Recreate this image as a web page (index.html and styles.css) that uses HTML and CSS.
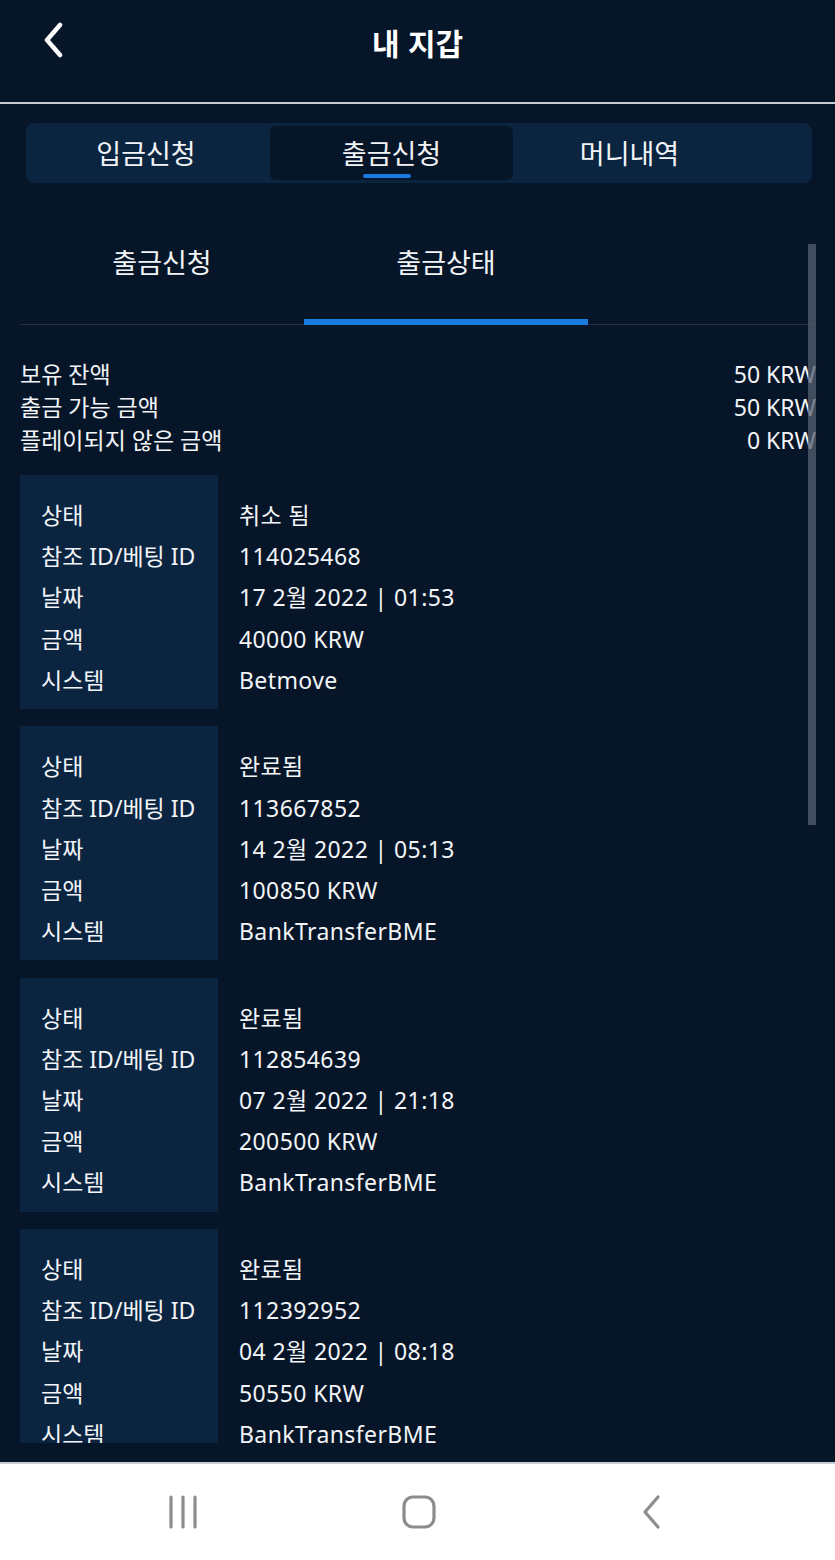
FILE: index.html
```html
<!DOCTYPE html>
<html lang="ko">
<head>
  <meta charset="UTF-8" />
  <title>내 지갑</title>
  <meta name="viewport" content="width=device-width, initial-scale=1" />
  <link rel="stylesheet" href="styles.css">
</head>
<body>

<div class="screen">
  <!-- 상단 헤더 -->
  <header class="topbar">
    <button class="back" aria-label="뒤로">
      <svg width="24" height="36" viewBox="0 0 24 36"><path d="M18 3 L5 18 L18 33" fill="none" stroke="#fff" stroke-width="4.5" stroke-linecap="round" stroke-linejoin="round"/></svg>
    </button>
    <h1>내 지갑</h1>
  </header>

  <!-- 메인 탭 -->
  <div class="main-tabs">
    <div class="main-tab">입금신청</div>
    <div class="main-tab active">출금신청</div>
    <div class="main-tab">머니내역</div>
  </div>

  <div class="content">
    <div class="sub-tabs">
      <div class="sub-tab">출금신청</div>
      <div class="sub-tab active">출금상태</div>
    </div>

    <div class="balance">
      <div class="bal-row"><span>보유 잔액</span><span>50 KRW</span></div>
      <div class="bal-row"><span>출금 가능 금액</span><span>50 KRW</span></div>
      <div class="bal-row"><span>플레이되지 않은 금액</span><span>0 KRW</span></div>
    </div>

    <div class="history">
      <div class="card">
        <div class="labels"><div>상태</div><div>참조 ID/베팅 ID</div><div>날짜</div><div>금액</div><div>시스템</div></div>
        <div class="values"><div>취소 됨</div><div>114025468</div><div>17 2월 2022 | 01:53</div><div>40000 KRW</div><div>Betmove</div></div>
      </div>
      <div class="card">
        <div class="labels"><div>상태</div><div>참조 ID/베팅 ID</div><div>날짜</div><div>금액</div><div>시스템</div></div>
        <div class="values"><div>완료됨</div><div>113667852</div><div>14 2월 2022 | 05:13</div><div>100850 KRW</div><div>BankTransferBME</div></div>
      </div>
      <div class="card">
        <div class="labels"><div>상태</div><div>참조 ID/베팅 ID</div><div>날짜</div><div>금액</div><div>시스템</div></div>
        <div class="values"><div>완료됨</div><div>112854639</div><div>07 2월 2022 | 21:18</div><div>200500 KRW</div><div>BankTransferBME</div></div>
      </div>
      <div class="card">
        <div class="labels"><div>상태</div><div>참조 ID/베팅 ID</div><div>날짜</div><div>금액</div><div>시스템</div></div>
        <div class="values"><div>완료됨</div><div>112392952</div><div>04 2월 2022 | 08:18</div><div>50550 KRW</div><div>BankTransferBME</div></div>
      </div>
    </div>

    <div class="scrollbar"></div>
  </div>

  <!-- 안드로이드 내비게이션 바 -->
  <footer class="navbar">
    <svg width="30" height="34" viewBox="0 0 30 34"><path d="M3 2 V32 M15 2 V32 M27 2 V32" stroke="#8c8c8c" stroke-width="3.2" stroke-linecap="round"/></svg>
    <svg width="34" height="34" viewBox="0 0 34 34"><rect x="2" y="2" width="30" height="30" rx="9" fill="none" stroke="#8c8c8c" stroke-width="3.2"/></svg>
    <svg width="24" height="34" viewBox="0 0 24 34"><path d="M18 2 L5 17 L18 32" fill="none" stroke="#8c8c8c" stroke-width="3.2" stroke-linecap="round" stroke-linejoin="round"/></svg>
  </footer>
</div>

</body>
</html>
```

FILE: styles.css
```css
:root {
  --bg: #061628;
  --panel: #0b2541;
  --blue: #1a7be0;
}
* {
  box-sizing: border-box;
  font-family: 'Noto Sans', 'Noto Sans CJK KR', sans-serif;
}
body {
  margin: 0;
  background: var(--bg);
  color: #f2f4f7;
}
.screen {
  height: 1560px;
  display: flex;
  flex-direction: column;
  overflow: hidden;
}
.topbar {
  height: 104px;
  flex: none;
  display: flex;
  align-items: center;
  justify-content: center;
  padding-bottom: 19px;
  border-bottom: 2px solid #c6cad2;
  position: relative;
}
.topbar h1 {
  margin: 0;
  font-size: 30px;
  font-weight: bold;
  font-family: 'Noto Sans CJK KR', sans-serif;
  color: #fff;
}
.back {
  position: absolute;
  left: 42px;
  top: 22px;
  background: none;
  border: none;
  padding: 0;
}
.main-tabs {
  margin: 19px 23px 0 26px;
  height: 60px;
  background: var(--panel);
  border-radius: 8px;
  display: flex;
  padding: 3px 0;
}
.main-tab {
  width: 244px;
  display: flex;
  align-items: center;
  justify-content: center;
  font-family: 'Noto Sans CJK KR', sans-serif;
  font-size: 27px;
  color: #f2f4f7;
  border-radius: 6px;
  position: relative;
  padding-bottom: 2px;
}
.main-tab:first-child {
  width: 240px;
}
.main-tab.active {
  width: 243px;
  margin-left: 4px;
  background: var(--bg);
}
.main-tab:last-child {
  width: 233px;
}
.main-tab.active::after {
  content: "";
  position: absolute;
  left: 93px;
  bottom: 2px;
  width: 48px;
  height: 4px;
  border-radius: 2px;
  background: var(--blue);
}
.content {
  flex: 1;
  position: relative;
  padding: 0 19px 0 20px;
  display: flex;
  flex-direction: column;
  border-bottom: 2px solid #c9ced6;
}
.sub-tabs {
  margin-top: 58px;
  height: 84px;
  display: flex;
  border-bottom: 1px solid #22303f;
}
.sub-tab {
  width: 284px;
  text-align: center;
  font-family: 'Noto Sans CJK KR', sans-serif;
  font-size: 27px;
  line-height: 30px;
  padding-top: 6px;
  color: #f2f4f7;
}
.sub-tab.active {
  border-bottom: 6px solid var(--blue);
  margin-bottom: -1px;
}
.balance {
  margin-top: 33px;
  font-size: 23px;
  line-height: 33px;
}
.bal-row {
  display: flex;
  justify-content: space-between;
}
.history {
  margin-top: 18px;
  height: 968px;
  overflow: hidden;
  display: flex;
  flex-direction: column;
  gap: 17.3px;
}
.card {
  display: flex;
  flex: none;
  font-size: 23px;
  line-height: 41.2px;
}
.labels {
  width: 198px;
  background: var(--panel);
  padding: 20px 0 8px 21px;
}
.values {
  padding: 20px 0 8px 21px;
  letter-spacing: 0.4px;
}
.scrollbar {
  position: absolute;
  right: 19px;
  top: 61px;
  width: 8px;
  height: 581px;
  background: rgba(84, 96, 112, 0.75);
}
.navbar {
  height: 96px;
  flex: none;
  background: #fff;
  display: flex;
  align-items: center;
  justify-content: space-between;
  padding: 0 171px 0 168px;
}
```
